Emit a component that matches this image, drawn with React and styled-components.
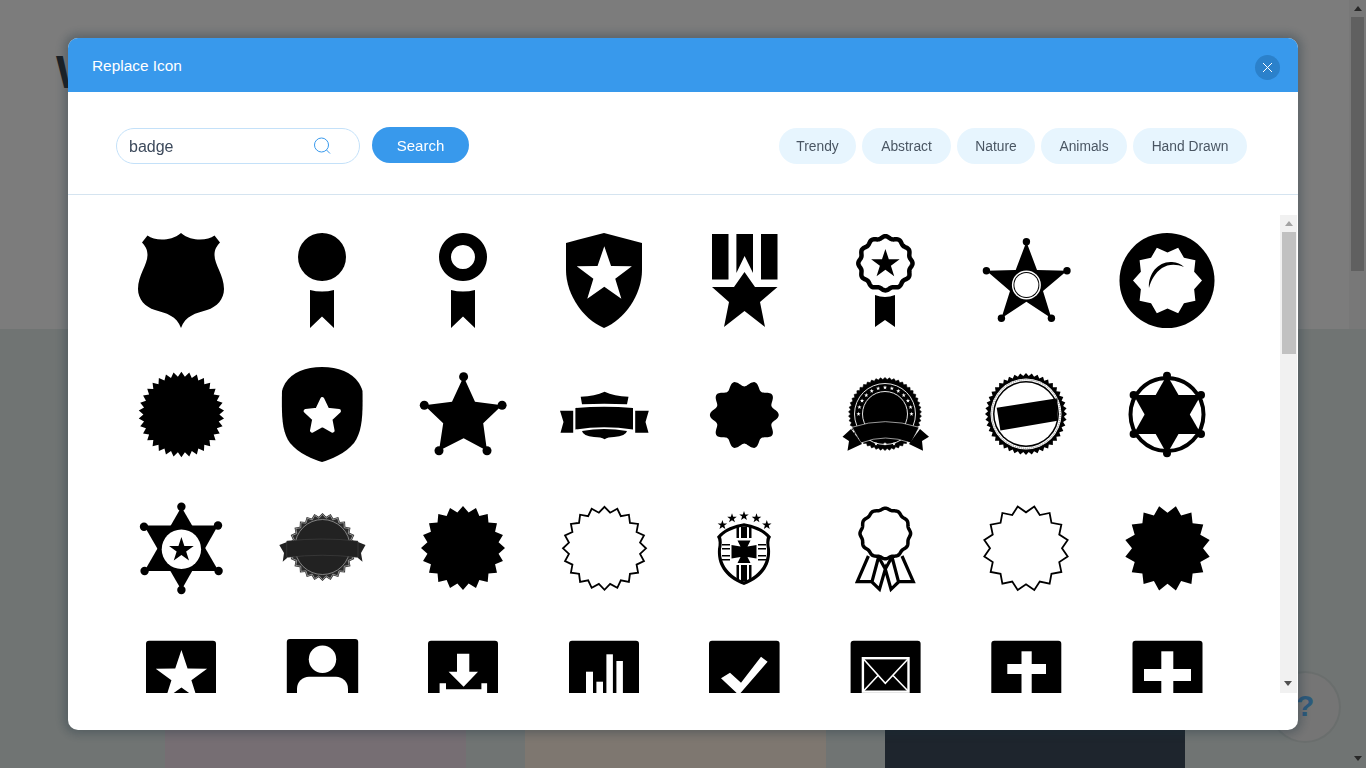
import React from "react";
import styled, { createGlobalStyle } from "styled-components";

const GlobalStyle = createGlobalStyle`
  html, body {
    margin: 0;
    padding: 0;
    height: 100%;
    overflow: hidden;
    font-family: "Liberation Sans", Arial, sans-serif;
  }
  * {
    box-sizing: border-box;
  }
`;

const Page = styled.div`
  position: relative;
  height: 768px;
  overflow: hidden;
  display: flex;
  flex-direction: column;
`;

const Hero = styled.section`
  height: 329px;
  flex: none;
  padding: 44px 0 0 56px;
  background: #f8f8f8;
`;

const Heading = styled.h1`
  margin: 0;
  font-size: 46px;
  font-weight: 700;
  line-height: 56px;
  color: #38424c;
`;

const Gallery = styled.section`
  flex: 1;
  display: flex;
  gap: 59px;
  padding: 380px 0 0 165px;
  background: #e0e8e6;
`;

const Card = styled.div`
  width: ${(p) => p.$w}px;
  height: 60px;
  background: ${(p) => p.$bg};
`;

const PageScrollbar = styled.div`
  position: absolute;
  top: 0;
  right: 0;
  width: 17px;
  height: 329px;
  padding: 6px 2px 0;
  display: flex;
  flex-direction: column;
  align-items: center;
  background: #f0f0f0;
`;

const PageThumb = styled.div`
  width: 13px;
  height: 254px;
  margin-top: 6px;
  background: #c0c0c0;
`;

const PageArrowDown = styled.div`
  position: absolute;
  right: 4px;
  bottom: 7px;
`;

const Arrow = styled.div`
  width: 0;
  height: 0;
  border-left: 4px solid transparent;
  border-right: 4px solid transparent;
  ${(p) => (p.$down ? "border-top" : "border-bottom")}: 5px solid ${(p) => p.$color};
`;

const HelpBubble = styled.div`
  position: absolute;
  left: 1271px;
  top: 673px;
  width: 68px;
  height: 68px;
  padding: 0 0 2px 25px;
  border-radius: 50%;
  display: flex;
  align-items: center;
  background: #eaeaea;
  box-shadow: 0 0 0 2px rgba(0, 0, 0, 0.05);
  font-size: 30px;
  font-weight: 700;
  color: #58b4f8;
`;

const Overlay = styled.div`
  position: fixed;
  inset: 0;
  padding: 38px 68px;
  display: flex;
  background: rgba(0, 0, 0, 0.5);
`;

const Dialog = styled.div`
  width: 1230px;
  height: 692px;
  display: flex;
  flex-direction: column;
  border-radius: 10px;
  overflow: hidden;
  background: #fff;
  box-shadow: 0 0 10px 4px rgba(22, 45, 61, 0.3);
`;

const Header = styled.header`
  height: 54px;
  flex: none;
  padding: 0 18px 0 24px;
  display: flex;
  align-items: center;
  justify-content: space-between;
  background: #3899ec;
`;

const Title = styled.h2`
  margin: 1px 0 0;
  font-size: 15.4px;
  font-weight: 400;
  color: #fff;
`;

const CloseButton = styled.button`
  width: 25px;
  height: 25px;
  margin-top: 5px;
  padding: 0;
  border: 0;
  border-radius: 50%;
  display: flex;
  align-items: center;
  justify-content: center;
  background: #2b81cb;
`;

const Toolbar = styled.div`
  height: 103px;
  flex: none;
  padding: 36px 51px 0 48px;
  display: flex;
  align-items: flex-start;
  border-bottom: 1px solid #d5e4f0;
`;

const SearchField = styled.div`
  width: 244px;
  height: 36px;
  padding: 0 28px 0 12px;
  display: flex;
  align-items: center;
  border: 1px solid #c4e1f9;
  border-radius: 18px;
`;

const SearchInput = styled.input`
  flex: 1;
  min-width: 0;
  padding: 2px 0 0;
  border: 0;
  outline: 0;
  font-family: inherit;
  font-size: 16px;
  color: #3d4a5c;
`;

const SearchButton = styled.button`
  width: 97px;
  height: 36px;
  margin: -1px 0 0 12px;
  padding: 0;
  border: 0;
  border-radius: 18px;
  background: #3899ec;
  font-family: inherit;
  font-size: 15px;
  color: #fff;
`;

const Chips = styled.div`
  margin-left: auto;
  display: flex;
  gap: 6px;
`;

const Chip = styled.button`
  width: ${(p) => p.$w}px;
  height: 36px;
  padding: 0;
  border: 0;
  border-radius: 18px;
  background: #e7f5fe;
  font-family: inherit;
  font-size: 13.8px;
  color: #4a5663;
`;

const Body = styled.div`
  height: 498px;
  flex: none;
  display: flex;
`;

const IconGrid = styled.div`
  flex: 1;
  min-width: 0;
  height: 498px;
  overflow: hidden;
  padding: 38px 0 0 65px;
  display: grid;
  grid-template-columns: repeat(8, 96px);
  grid-auto-rows: 96px;
  column-gap: 44.88px;
  row-gap: 38px;
  align-content: start;
`;

const Glyph = styled.svg`
  display: block;
  width: 96px;
  height: 96px;
  fill: #000;
`;

const DialogScrollbar = styled.div`
  position: relative;
  width: 17px;
  height: 478px;
  margin: 20px 1px 0 0;
  padding-top: 6px;
  display: flex;
  flex-direction: column;
  align-items: center;
  background: #f1f1f1;
`;

const DialogThumb = styled.div`
  width: 14px;
  height: 122px;
  margin-top: 6px;
  background: #c1c1c1;
`;

const DialogArrowDown = styled.div`
  position: absolute;
  left: 4px;
  bottom: 7px;
`;

// shapes used by more than one icon
const star = (cx, cy, R, r, n = 5, rot = -90) =>
  Array.from({ length: n * 2 }, (_, i) => {
    const a = ((rot + (i * 180) / n) * Math.PI) / 180;
    const d = i % 2 ? r : R;
    return `${(cx + d * Math.cos(a)).toFixed(2)},${(cy + d * Math.sin(a)).toFixed(2)}`;
  }).join(" ");

const wavy = (cx, cy, R, amp, n) =>
  Array.from({ length: 240 }, (_, i) => {
    const a = (i / 240) * Math.PI * 2;
    const d = R + amp * Math.cos(n * a);
    return `${(cx + d * Math.cos(a)).toFixed(2)},${(cy + d * Math.sin(a)).toFixed(2)}`;
  }).join(" ");

const Ribbon = () => <path d="M36 57Q48 60 60 57V95L48 83.5 36 95Z" />;

const Balls = ({ pts, r }) =>
  pts.map(([x, y]) => <circle key={`${x}-${y}`} cx={x} cy={y} r={r} />);

const SquareBase = ({ x = 13, w = 70, y = 5.7 }) => (
  <rect x={x} y={y} width={w} height="72" rx="3" />
);

const icons = [
  // row 1
  <path d="M48 0C42 5 35 6.5 29 6.5 23 6.5 18 5 14.5 2.5L9 9.5C12 13 14.5 16 14.5 22 14.5 32 5 42 5 56 5 66 12 74 22 77 33 80 44 83 48 95 52 83 63 80 74 77 84 74 91 66 91 56 91 42 81.5 32 81.5 22 81.5 16 84 13 87 9.5L81.5 2.5C78 5 73 6.5 67 6.5 61 6.5 54 5 48 0Z" />,
  <>
    <circle cx="48" cy="24" r="24" />
    <Ribbon />
  </>,
  <>
    <path fillRule="evenodd" d="M48 0a24 24 0 1 0 .01 0ZM48 12a12 12 0 1 1-.01 0Z" />
    <Ribbon />
  </>,
  <>
    <path d="M48 0L86 10V37C86 62 68 87 48 95 28 87 10 62 10 37V10Z" />
    <polygon fill="#fff" points={star(48.3, 42.2, 29, 11.5)} />
  </>,
  <>
    <rect x="15" y="1" width="16.5" height="45.5" />
    <path d="M39.4 1H56V40L47.6 23 39.4 40Z" />
    <rect x="64" y="1" width="16.5" height="45.5" />
    <polygon points="47.5,39 58,54 80.5,54 63,69 68,94 47.5,78 27,94 32,69 15,54 37,54" />
  </>,
  <>
    <polygon fill="#fff" stroke="#000" strokeWidth="4.5" points={wavy(48.4, 30.3, 26, 1.1, 12)} />
    <polygon points={star(48.4, 31, 15, 5.8)} />
    <path d="M38 62Q48 66 58 62V94L48 87 38 94Z" />
  </>,
  <>
    <polygon points="48.4,8.7 59,37 89,37.7 65,58 73.4,85.3 48.4,68.7 23.4,85.3 32,58 8.4,37.7 37.7,37" />
    <Balls pts={[[48.4, 8.7], [8.4, 37.7], [89, 37.7], [23.4, 85.3], [73.4, 85.3]]} r="3.7" />
    <circle cx="48.4" cy="52" r="14.5" fill="#fff" />
    <circle cx="48.4" cy="52" r="13" />
    <circle cx="48.4" cy="52" r="12" fill="#fff" />
  </>,
  <>
    <circle cx="48" cy="47.5" r="47.5" />
    <polygon fill="#fff" points={star(48.5, 47.5, 34.5, 28, 10, 0)} />
    <path d="M30 55C29 40 40 28 53 29 58 29.5 62 31 65 34 57 30.5 49 31 43 35 36 40 32 47 30 55Z" />
  </>,
  // row 2
  <polygon points={star(48.4, 47.5, 42.8, 38, 34)} />,
  <>
    <path d="M48 0C68 0 84 8 88.5 24 89 50 88 65 80 76 72 86 56 93 48 95 40 93 24 86 16 76 8 65 7.5 50 8 24 12 8 28 0 48 0Z" />
    <polygon fill="#fff" stroke="#fff" strokeWidth="4" strokeLinejoin="round" points={star(48.3, 49.5, 17.5, 8.5)} />
  </>,
  <>
    <polygon points="48.6,9.7 60,34.7 87.1,38.3 68.2,56.3 72,83.7 48.6,71.3 24,83.7 28.2,56.3 9.3,38.3 37,34.7" />
    <Balls pts={[[48.6, 9.7], [9.3, 38.3], [87.1, 38.3], [24, 83.7], [72, 83.7]]} r="4.5" />
  </>,
  <>
    <path d="M48.6 24.7Q39 29 24.7 29.7L26 37.3Q48 36 71 37.3L72.5 29.7Q58 29 48.6 24.7Z" />
    <path d="M19.4 41Q48 38.5 77 41V62.5Q48 58 19.4 62.5Z" />
    <path d="M4 43.7H17.2V65.7H4.5L7.5 55Z" />
    <path d="M79.2 43.7H92.8L89.5 55 92.5 65.7H79.2Z" />
    <path d="M26 64Q48 60 71 64 70 69 58 70 52 70 48.6 72.3 45 70 38 70 27 69 26 64Z" />
  </>,
  <polygon points={wavy(47.3, 48, 31.5, 2.9, 10)} />,
  <>
    <polygon stroke="#000" strokeWidth=".6" points={star(48, 47, 36.5, 34.5, 50)} />
    <circle cx="48" cy="47" r="30.5" fill="none" stroke="#fff" strokeWidth=".9" />
    <circle cx="48" cy="47" r="22.5" fill="none" stroke="#fff" strokeWidth=".9" />
    {Array.from({ length: 13 }, (_, i) => {
      const a = ((-180 + i * 15) * Math.PI) / 180;
      return (
        <polygon
          key={i}
          fill="#fff"
          points={star(48 + 26.5 * Math.cos(a), 47 + 26.5 * Math.sin(a), 2.2, 0.9)}
        />
      );
    })}
    <path d="M15 60.3Q48 49 82 60.3L74 76Q48 66 24 76Z" stroke="#fff" strokeWidth=".6" />
    <path d="M14 62L5.5 69.7 12 74 10.5 83.7 25 77Z" />
    <path d="M83 62L92 69.7 85 74 86 83.7 72 77Z" />
    {[-9, 0, 9].map((dx) => (
      <polygon key={dx} fill="#fff" points={star(48 + dx, 77, 2, 0.8)} />
    ))}
  </>,
  <>
    <polygon points={star(48, 47, 41, 38, 44)} />
    <circle cx="48" cy="47" r="35.5" fill="#fff" />
    <circle cx="48" cy="47" r="33" />
    <circle cx="48" cy="47" r="31.5" fill="#fff" />
    <polygon points="18.7,40.7 79.500,31.3 79.500,53.7 22.400,63.500" />
    <circle cx="48" cy="47" r="34.3" fill="none" stroke="#777" strokeWidth="1" strokeDasharray="1 1" />
  </>,
  <>
    <circle cx="48" cy="47.5" r="36.5" fill="none" stroke="#000" strokeWidth="4" />
    <polygon points="48,8 82,67 14.6,67" />
    <polygon points="48,87 82,28 14.6,28" />
    <Balls pts={[[48, 8.7], [14.6, 28], [82, 28], [14.6, 67], [82, 67], [48, 86.3]]} r="4" />
  </>,
  // row 3
  <>
    <polygon points="48.4,6 85.5,70 11.5,70" />
    <polygon points="48.4,89 85,24.5 11,24.5" />
    <Balls pts={[[48.4, 5.7], [11, 25.7], [85, 24.5], [11.6, 70], [85.6, 70], [48.4, 89]]} r="4.2" />
    <circle cx="48.4" cy="48.3" r="19.7" fill="#fff" />
    <polygon points={star(48.4, 49, 13, 5)} />
  </>,
  <>
    <polygon fill="#2a2a2a" points={star(48.5, 46, 34, 30.5, 26)} />
    <polygon fill="none" stroke="#bbb" strokeWidth=".7" points={star(48.5, 46, 32.5, 29, 26)} />
    <circle cx="48.5" cy="46" r="27.5" fill="#222" stroke="#999" strokeWidth=".8" />
    <path d="M5.3 44L13 41V57L8.7 60.7 10 52Z" fill="#222" />
    <path d="M91.5 44L84 41V57L88.5 60.7 87 52Z" fill="#222" />
    <path d="M12.7 40Q48 36 84 40V56.5Q48 52 12.7 56.5Z" fill="#222" stroke="#555" strokeWidth=".4" />
  </>,
  <polygon points={star(48, 47, 42, 36, 20)} />,
  <polygon fill="#fff" stroke="#000" strokeWidth="1.8" points={star(48.5, 47.3, 41.5, 36, 20)} />,
  <>
    {[[25.4, 24], [35, 17.3], [47, 15], [59.5, 17.3], [69.8, 24]].map(([x, y]) => (
      <polygon key={x} points={star(x, y, 5, 2)} />
    ))}
    <path d="M47 22.3C56 24 67 27 74 35.7 72 39 72 43 73 48 74 62 68 76 47 84 26 76 20 62 21 48 22 43 22 39 20 35.7 27 27 38 24 47 22.3Z" />
    <path
      fill="#fff"
      d="M47 25.5C55 27 64 29.5 70 36 69 39 69 43 70 48 71 60 65 73 47 80.5 29 73 23 60 24 48 25 43 25 39 24 36 30 29.5 39 27 47 25.5Z"
    />
    <rect x="39.5" y="26" width="2.5" height="52" />
    <rect x="44" y="25.5" width="6" height="55" />
    <rect x="52" y="26" width="2.5" height="52" />
    <rect x="25" y="43" width="44" height="1.5" />
    <rect x="25" y="47" width="44" height="1.5" />
    <rect x="25" y="54" width="44" height="1.5" />
    <rect x="25" y="58" width="44" height="1.5" />
    <rect x="33" y="37" width="28" height="27" fill="#fff" />
    <path d="M40.5 39.5H53.5L50.5 45.5 59.5 44V57.5L50.5 56 53.5 62H40.5L43.5 56 34.5 57.5V44L43.5 45.5Z" />
  </>,
  <>
    <path
      d="M31.4 55L20.3 80.7H35L41.6 56M35 81L42.5 88.3 48.3 68 54 88.3 61.5 81M65 55L76.3 80.7H61.5L55 56M41.6 56L48.3 68 55 56"
      fill="none"
      stroke="#000"
      strokeWidth="3.2"
    />
    <polygon fill="#fff" stroke="#000" strokeWidth="3.5" points={wavy(48.3, 32.5, 24.5, 0.8, 12)} />
  </>,
  <polygon fill="#fff" stroke="#000" strokeWidth="1.8" points={star(48, 47.3, 42.5, 36, 16, 11.25)} />,
  <polygon points={star(48.5, 47.3, 43, 35.5, 16, 11.25)} />,
  // row 4
  <>
    <SquareBase />
    <polygon fill="#fff" points={star(48.4, 42, 27, 10.5)} />
  </>,
  <>
    <SquareBase x={12.8} w={71.4} y={4} />
    <circle cx="48.5" cy="24.3" r="13.7" fill="#fff" />
    <rect x="23" y="41.7" width="51" height="30" rx="12" fill="#fff" />
  </>,
  <>
    <SquareBase />
    <path fill="#fff" d="M24.6 48.3H31V54.3H66.4V48.3H72.1V80H24.6Z" />
    <path fill="#fff" d="M42 18.7H54.3V36.7H63L48.6 51.7 33.6 36.7H42Z" />
  </>,
  <>
    <SquareBase />
    <rect x="30" y="36.7" width="7" height="30" fill="#fff" />
    <rect x="40.4" y="46.7" width="6.6" height="30" fill="#fff" />
    <rect x="50.4" y="19.3" width="6.5" height="50" fill="#fff" />
    <rect x="60.4" y="26" width="6.5" height="50" fill="#fff" />
  </>,
  <>
    <SquareBase x={12} w={70.6} />
    <polygon fill="#fff" points="24,43.3 33,37.7 44,47.7 64,21.7 70.6,26.7 41.800,60" />
  </>,
  <>
    <SquareBase x={13.6} />
    <rect x="25.9" y="23.2" width="45.6" height="33.5" fill="none" stroke="#fff" strokeWidth="2.4" />
    <path d="M26.5 24L48.3 48.3 71 24M26.5 56L41 40.5M71 56L56 40.5" fill="none" stroke="#fff" strokeWidth="1.6" />
  </>,
  <>
    <SquareBase x={13.3} />
    <rect x="43.5" y="16.3" width="10.2" height="50" fill="#fff" />
    <rect x="29.3" y="29" width="38.7" height="10" fill="#fff" />
  </>,
  <>
    <SquareBase x={13.5} />
    <rect x="42.3" y="16.3" width="12" height="50" fill="#fff" />
    <rect x="25" y="34" width="47" height="12" fill="#fff" />
  </>,
];

const categories = [
  { label: "Trendy", w: 77 },
  { label: "Abstract", w: 89 },
  { label: "Nature", w: 78 },
  { label: "Animals", w: 86 },
  { label: "Hand Drawn", w: 114 },
];

const App = () => {
  return (
    <>
      <GlobalStyle />
      <Page>
        <Hero>
          <Heading>W</Heading>
        </Hero>
        <Gallery>
          <Card $w={301} $bg="#ecdce6" />
          <Card $w={301} $bg="#fdeee0" />
          <Card $w={300} $bg="#3c4a5a" />
        </Gallery>
        <PageScrollbar>
          <Arrow $color="#505050" />
          <PageThumb />
        </PageScrollbar>
        <PageArrowDown>
          <Arrow $down $color="#505050" />
        </PageArrowDown>
        <HelpBubble>?</HelpBubble>
        <Overlay>
          <Dialog>
            <Header>
              <Title>Replace Icon</Title>
              <CloseButton aria-label="Close">
                <svg width="11" height="11" viewBox="0 0 11 11">
                  <path d="M1 1L10 10M10 1L1 10" stroke="#fff" strokeWidth="1" fill="none" />
                </svg>
              </CloseButton>
            </Header>
            <Toolbar>
              <SearchField>
                <SearchInput value="badge" readOnly />
                <svg width="18" height="18" viewBox="0 0 18 18">
                  <circle cx="8.5" cy="8" r="7" fill="none" stroke="#3899ec" strokeWidth="1" />
                  <path d="M13.5 13L17 16.5" stroke="#3899ec" strokeWidth="1" fill="none" />
                </svg>
              </SearchField>
              <SearchButton>Search</SearchButton>
              <Chips>
                {categories.map((c) => (
                  <Chip key={c.label} $w={c.w}>
                    {c.label}
                  </Chip>
                ))}
              </Chips>
            </Toolbar>
            <Body>
              <IconGrid>
                {icons.map((icon, i) => (
                  <Glyph key={i} viewBox="0 0 96 96">
                    {icon}
                  </Glyph>
                ))}
              </IconGrid>
              <DialogScrollbar>
                <Arrow $color="#a3a3a3" />
                <DialogThumb />
                <DialogArrowDown>
                  <Arrow $down $color="#505050" />
                </DialogArrowDown>
              </DialogScrollbar>
            </Body>
          </Dialog>
        </Overlay>
      </Page>
    </>
  );
};

export default App;
